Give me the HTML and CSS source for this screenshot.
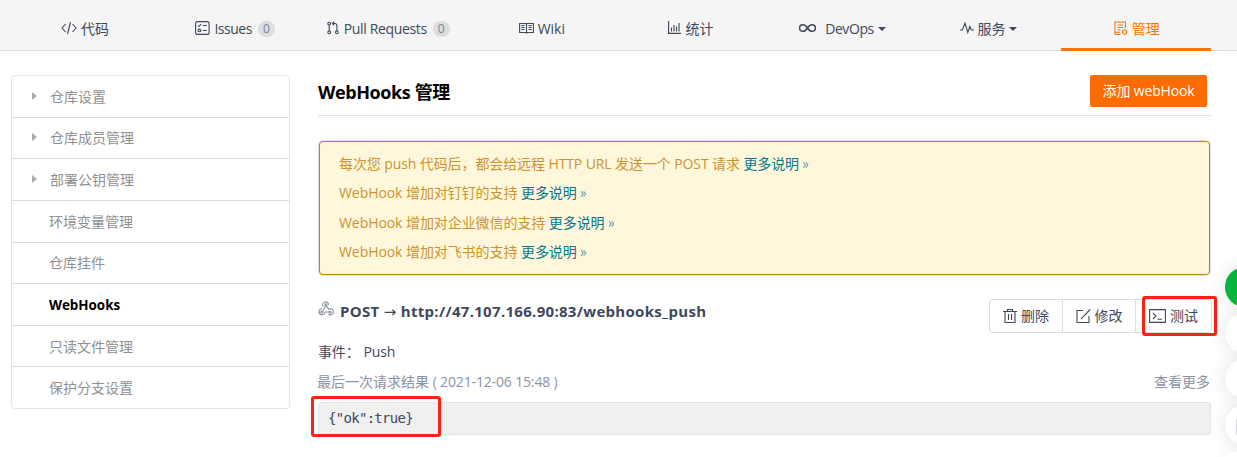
FILE: index.html
```html
<!DOCTYPE html>
<html lang="zh-CN">
<head>
<meta charset="utf-8">
<title>WebHooks 管理</title>
<link rel="stylesheet" href="styles.css">
</head>
<body>
<nav class="tabs">
  <a class="tab tab-code"><svg class="ico" width="16" height="14" viewBox="0 0 16 14"><path d="M4.500 3 1 7l3.500 4M11.500 3 15 7l-3.500 4M9.500 1l-3 12"/></svg><span>代码</span></a>
  <a class="tab tab-issues"><svg class="ico" width="15" height="14" viewBox="0 0 15 14"><rect x=".6" y=".6" width="13.500" height="12.800" rx="2"/><path d="M3 4.300l1.200 1 2-2.300M7.800 4.500h4M7.800 9.500h4"/><circle cx="4.400" cy="9.400" r="1.300"/></svg><span>Issues</span><b class="count">0</b></a>
  <a class="tab tab-pr"><svg class="ico" width="12" height="14" viewBox="0 0 12 14"><circle cx="2.200" cy="2.600" r="1.400"/><circle cx="2.200" cy="11.300" r="1.400"/><circle cx="9.900" cy="11.300" r="1.400"/><path d="M2.200 4v5.900M9.900 9.900V4.500q0-2-2-2H5.500M7.200.7 5.400 2.500l1.800 1.800"/></svg><span>Pull Requests</span><b class="count">0</b></a>
  <a class="tab tab-wiki"><svg class="ico" width="15" height="12" viewBox="0 0 15 12"><path d="M.6 1.500h6.300l.6.600.6-.6h6.300v9H8.100l-.6.500-.6-.5H.6zM7.500 2v9M2.300 3.500h3.200M2.300 5.500h3.200M2.300 7.500h3.200M9.500 3.500h3.200M9.500 5.500h3.200M9.500 7.500h3.200"/></svg><span>Wiki</span></a>
  <a class="tab tab-stats"><svg class="ico" width="13" height="13" viewBox="0 0 13 13"><path d="M.6 0v12.400H13M3.500 10.500V6.500M6 10.500V4M8.500 10.500V5.500M11 10.500V2"/></svg><span>统计</span></a>
  <a class="tab tab-devops"><svg class="ico loop" width="19" height="10" viewBox="0 0 19 10"><path d="M9.500 5C8 2.500 6.800 1.700 4.900 1.700a3.300 3.300 0 0 0 0 6.600C6.800 8.300 8 7.500 9.500 5s2.700-3.300 4.600-3.300a3.300 3.300 0 0 1 0 6.600C12.200 8.300 11 7.500 9.500 5z"/></svg><span>DevOps</span><i class="caret"></i></a>
  <a class="tab tab-service"><svg class="ico" width="14" height="12" viewBox="0 0 14 12"><path d="M0 8h2.300L5 1.200 7.800 10.500l2-6L11.300 8H14"/></svg><span>服务</span><i class="caret"></i></a>
  <a class="tab tab-active"><svg class="ico" width="14" height="15" viewBox="0 0 14 15"><path d="M6.500 13.500H1V1h10.500v6M1 11.200h5M3.500 4h5.500M3.500 6.500h5.500M3.500 9h3"/><circle cx="10.600" cy="11" r="2.200"/></svg><span>管理</span></a>
</nav>
<div class="page">
  <aside class="menu">
    <a class="item parent"><i class="arrow"></i>仓库设置</a>
    <a class="item parent"><i class="arrow"></i>仓库成员管理</a>
    <a class="item parent"><i class="arrow"></i>部署公钥管理</a>
    <a class="item">环境变量管理</a>
    <a class="item">仓库挂件</a>
    <a class="item current">WebHooks</a>
    <a class="item">只读文件管理</a>
    <a class="item">保护分支设置</a>
  </aside>
  <main class="main">
    <header class="head"><h1 class="title">WebHooks 管理</h1><a class="add">添加 webHook</a></header>
    <section class="notice">
      <p class="line first">每次您 push 代码后，都会给远程 HTTP URL 发送一个 POST 请求 <a class="more">更多说明 <span class="raquo">»</span></a></p>
      <p class="line">WebHook 增加对钉钉的支持 <a class="more">更多说明 <span class="raquo">»</span></a></p>
      <p class="line">WebHook 增加对企业微信的支持 <a class="more">更多说明 <span class="raquo">»</span></a></p>
      <p class="line">WebHook 增加对飞书的支持 <a class="more">更多说明 <span class="raquo">»</span></a></p>
    </section>
    <section class="hook">
      <div class="hook-name"><svg class="ico hook-ico" width="16" height="15" viewBox="0 0 16 15"><path d="M5.200 5.500A3 3 0 1 1 10.700 4M8 4l2.500 4.300a3 3 0 1 1-.2 4.500M8 4 5.700 8.700M4.200 7.700A3 3 0 1 0 7 11h5.300M5.700 8.700 4.200 11"/><circle cx="8" cy="3.800" r="1"/><circle cx="3.800" cy="11" r="1"/><circle cx="12.200" cy="11" r="1"/></svg><strong class="url">POST <span class="to">→</span> http://47.107.166.90:83/webhooks_push</strong></div>
      <div class="actions">
        <a class="act act-delete"><svg class="ico" width="14" height="14" viewBox="0 0 14 14"><path d="M0 2.500h14M4.500 2.500v-2h5v2M2 2.500v11h10v-11M5.500 5v6M8.500 5v6"/></svg>删除</a>
        <a class="act"><svg class="ico" width="15" height="14" viewBox="0 0 15 14"><path d="M7 1.500H1v12h12V7M14.200.5 6.300 8.700 5 10"/></svg>修改</a>
        <a class="act act-test"><svg class="ico" width="17" height="14" viewBox="0 0 17 14"><path d="M.6.600h15.800v12.800H.6zM4 4l3 3-3 3M8.500 10.300h4.500"/></svg>测试<i class="mark mark-test"></i></a>
      </div>
    </section>
    <div class="event"><span>事件：</span><span class="push">Push</span></div>
    <div class="last"><span class="when">最后一次请求结果 <span class="date">( 2021-12-06 15:48 )</span></span><a>查看更多</a></div>
    <pre class="result">{"ok":true}<i class="mark mark-result"></i></pre>
  </main>
</div>
<div class="float">
  <i class="dot green"></i><i class="dot"></i><i class="dot"></i><i class="dot dot-form"></i><i class="dot dot-last"></i>
</div>
</body>
</html>
```
FILE: styles.css
```css
* { box-sizing: border-box; }
html, body { height: 457px; overflow: hidden; }
body { margin: 0; position: relative; background: #fff; color: #40485b; font: 14px/20px "Open Sans", "Noto Sans CJK SC", sans-serif; }
p, h1, pre { margin: 0; }
.ico { flex: none; fill: none; stroke: currentColor; stroke-width: 1.1; }
.tabs { display: flex; height: 51px; padding: 7px 26px 0 10px; background: #f5f5f5; border-bottom: 1px solid #dcdddd; }
.tab { flex: none; width: 150.1px; display: flex; align-items: center; justify-content: center; gap: 4px; white-space: nowrap; }
.tab .ico { margin-top: -2px; }
.tab-issues { letter-spacing: -.5px; }
.tab-pr { letter-spacing: -.35px; gap: 5px; padding-left: 6px; }
.tab-wiki { padding-left: 13px; }
.tab-stats { padding-left: 11px; }
.tab-devops { gap: 8px; padding-left: 13px; letter-spacing: -.4px; }
.tab-service { padding-left: 5px; }
.loop { stroke-width: 1.500; }
.tab-active { color: #fe7300; height: 44px; border-bottom: 3px solid #fe7300; padding: 3px 0 0 2px; }
.count { width: 17px; height: 16px; margin-left: 2px; border-radius: 8px; background: #dcddde; color: #7486a0; font: 12px/16px "Open Sans", sans-serif; text-align: center; letter-spacing: 0; }
.tab-pr .count { margin-left: 1px; }
.caret { border: 4px solid transparent; border-top-color: currentColor; border-bottom: 0; margin-left: -1px; }
.tab-devops .caret { margin-left: -4px; }
.page { display: flex; gap: 28px; padding: 24px 26px 0 11px; }
.menu { flex: none; width: 279px; height: 334px; display: flex; flex-direction: column; border: 1px solid #dfe5e8; border-radius: 4px; }
.item { flex: 1; display: flex; align-items: center; padding: 1px 0 0 37px; color: #909090; }
.item + .item { border-top: 1px solid #dcdddd; }
.parent { padding-left: 20px; }
.arrow { border: 4px solid transparent; border-left: 5px solid #aaa; border-right: 0; margin: -2px 13px 0 0; }
.current { color: #000; font-weight: 700; font-size: 13.400px; }
.main { flex: 1; min-width: 0; }
.head { display: flex; justify-content: space-between; align-items: flex-start; height: 41px; border-bottom: 1px solid #e2e3e5; padding-right: 4px; }
.title { color: #000; font-size: 18px; line-height: 34px; letter-spacing: -.4px; }
.add { width: 117px; height: 32px; border-radius: 2px; background: #fe6b00; color: #fff; line-height: 32px; text-align: center; letter-spacing: -.15px; }
.notice { margin: 25px 1px 0; height: 134px; padding: 7px 19px; border: 1px solid #c08310; border-radius: 4px; background: #fff7db; color: #cb9430; box-shadow: 0 0 0 1px #dfe3e5; }
.line { height: 29.300px; line-height: 29.300px; white-space: nowrap; letter-spacing: -.07px; }
.first { letter-spacing: -.1px; }
.more { color: #08768b; }
.raquo { font-weight: 300; }
.hook { display: flex; justify-content: space-between; margin-top: 24px; height: 34px; margin-right: -1px; }
.hook-name { display: flex; gap: 6px; padding-top: 2px; color: #40485b; }
.hook-ico { color: #8c92a4; }
.url { font-size: 15px; letter-spacing: .3px; }
.to { font-family: "DejaVu Sans", sans-serif; font-weight: 400; }
.actions { display: flex; width: 223px; height: 34px; border: 1px solid #dcdddd; border-radius: 4px; }
.act { position: relative; flex: none; width: 73px; display: flex; align-items: center; justify-content: center; gap: 4px; }
.act + .act { border-left: 1px solid #dcdddd; }
.act-delete { width: 72px; }
.act-test { width: 76px; }
.mark { position: absolute; border: 3px solid #ff2116; border-radius: 3px; }
.mark-test { left: 6px; top: -4px; width: 75px; height: 40px; }
.event { display: flex; gap: 4px; margin-top: 9px; height: 20px; letter-spacing: -.15px; }
.last { display: flex; justify-content: space-between; margin: 10px 1px 0 -1px; height: 20px; color: #8c92a4; }
.date { letter-spacing: -.15px; }
.result { position: relative; margin-top: 10px; height: 33px; padding: 0 9px; border: 1px solid #dfe6e9; border-radius: 3px; background: #f0f0f0; font: 14px/31px "DejaVu Sans Mono", monospace; letter-spacing: -.7px; }
.mark-result { left: -8px; top: -7px; width: 130px; height: 41px; }
.float { position: absolute; left: 1195px; top: 237px; width: 42px; height: 220px; padding: 30px 0 0 30px; overflow: hidden; display: flex; flex-direction: column; gap: 6px; }
.dot { flex: none; width: 40px; height: 40px; border-radius: 50%; background: #fff; box-shadow: 0 0 18px rgba(0, 0, 0, .12); }
.dot-last { height: 6px; border-radius: 20px 20px 0 0 / 6px 6px 0 0; }
.green { background: #09b43d; }
.dot-form { padding: 14px 11px; }
.dot-form::before { content: ""; display: block; width: 16px; height: 12px; border: 2px solid #d4d5d8; }
```
